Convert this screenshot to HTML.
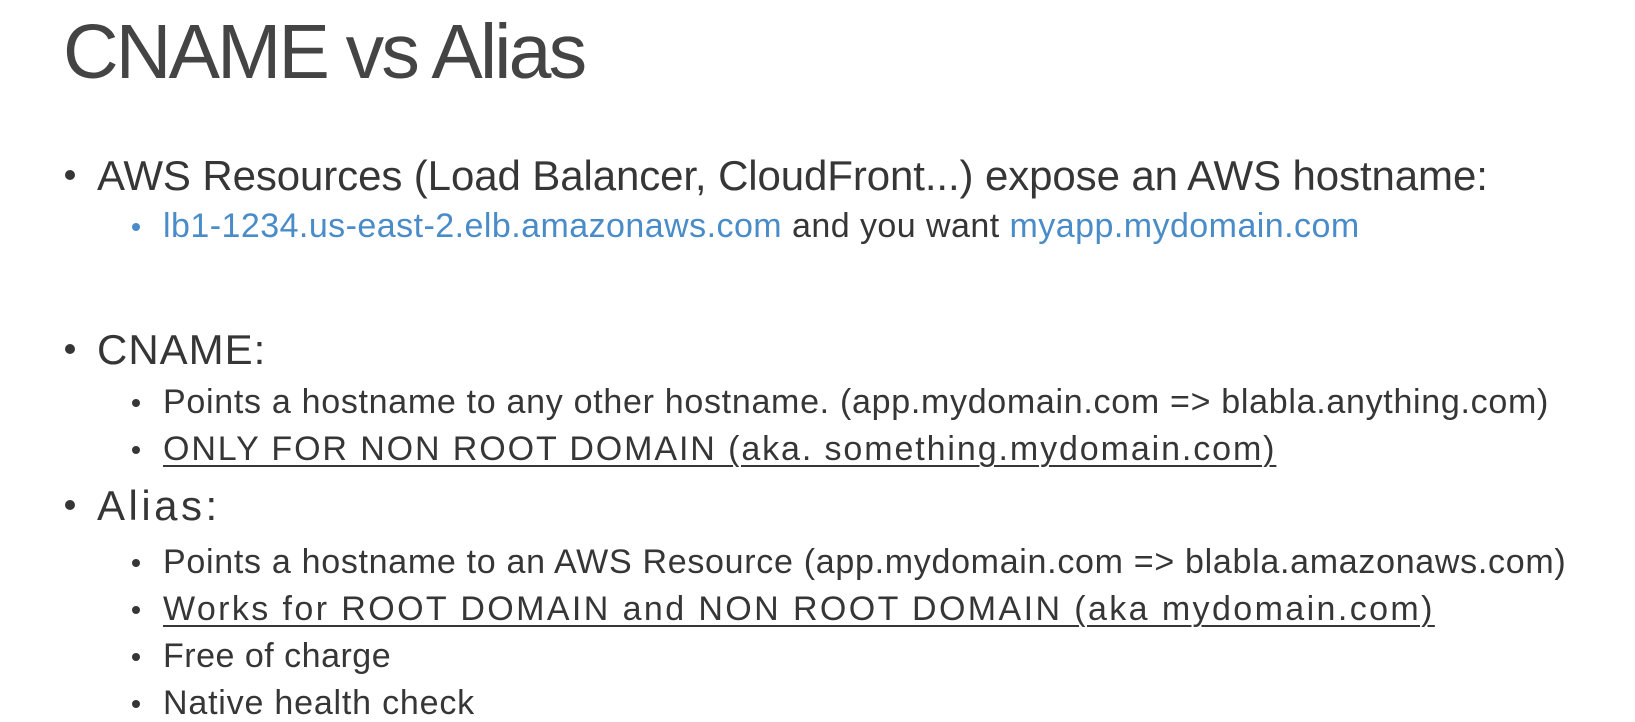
<!DOCTYPE html>
<html><head><meta charset="utf-8"><style>
body{margin:0;width:1635px;height:717px;background:#fff;overflow:hidden;font-family:"Liberation Sans",sans-serif;color:#363636}
.t{position:absolute;white-space:nowrap;line-height:1}
.b{color:#4a8cc8}
u{text-decoration-thickness:2px;text-underline-offset:5px}
.dot{position:absolute;border-radius:50%;background:#363636}
</style></head><body>
<div class="t" style="left:63px;top:14px;font-size:77px;letter-spacing:-2.8px;color:#444">CNAME vs Alias</div>

<div class="dot" style="left:65px;top:170px;width:10px;height:10px"></div>
<div class="t" style="left:97px;top:155px;font-size:42px;letter-spacing:-0.1px">AWS Resources (Load Balancer, CloudFront...) expose an AWS hostname:</div>
<div class="dot" style="left:132px;top:223px;width:8px;height:8px;background:#4a8cc8"></div>
<div class="t" style="left:163px;top:209px;font-size:34px;letter-spacing:0.45px"><span class="b">lb1-1234.us-east-2.elb.amazonaws.com</span> and you want <span class="b">myapp.mydomain.com</span></div>

<div class="dot" style="left:65px;top:344px;width:10px;height:10px"></div>
<div class="t" style="left:97px;top:329px;font-size:42px;letter-spacing:1px">CNAME:</div>
<div class="dot" style="left:132px;top:399px;width:8px;height:8px"></div>
<div class="t" style="left:163px;top:385px;font-size:34px;letter-spacing:0.7px">Points a hostname to any other hostname. (app.mydomain.com =&gt; blabla.anything.com)</div>
<div class="dot" style="left:132px;top:446px;width:8px;height:8px"></div>
<div class="t" style="left:163px;top:432px;font-size:34px;letter-spacing:1.9px"><u>ONLY FOR NON ROOT DOMAIN (aka. something.mydomain.com)</u></div>

<div class="dot" style="left:65px;top:500px;width:10px;height:10px"></div>
<div class="t" style="left:97px;top:485px;font-size:42px;letter-spacing:3.5px">Alias:</div>
<div class="dot" style="left:132px;top:559px;width:8px;height:8px"></div>
<div class="t" style="left:163px;top:545px;font-size:34px;letter-spacing:0.7px">Points a hostname to an AWS Resource (app.mydomain.com =&gt; blabla.amazonaws.com)</div>
<div class="dot" style="left:132px;top:606px;width:8px;height:8px"></div>
<div class="t" style="left:163px;top:592px;font-size:34px;letter-spacing:2.4px"><u>Works for ROOT DOMAIN and NON ROOT DOMAIN (aka mydomain.com)</u></div>
<div class="dot" style="left:132px;top:653px;width:8px;height:8px"></div>
<div class="t" style="left:163px;top:639px;font-size:34px;letter-spacing:0.5px">Free of charge</div>
<div class="dot" style="left:132px;top:700px;width:8px;height:8px"></div>
<div class="t" style="left:163px;top:686px;font-size:34px;letter-spacing:0.8px">Native health check</div>
</body></html>
